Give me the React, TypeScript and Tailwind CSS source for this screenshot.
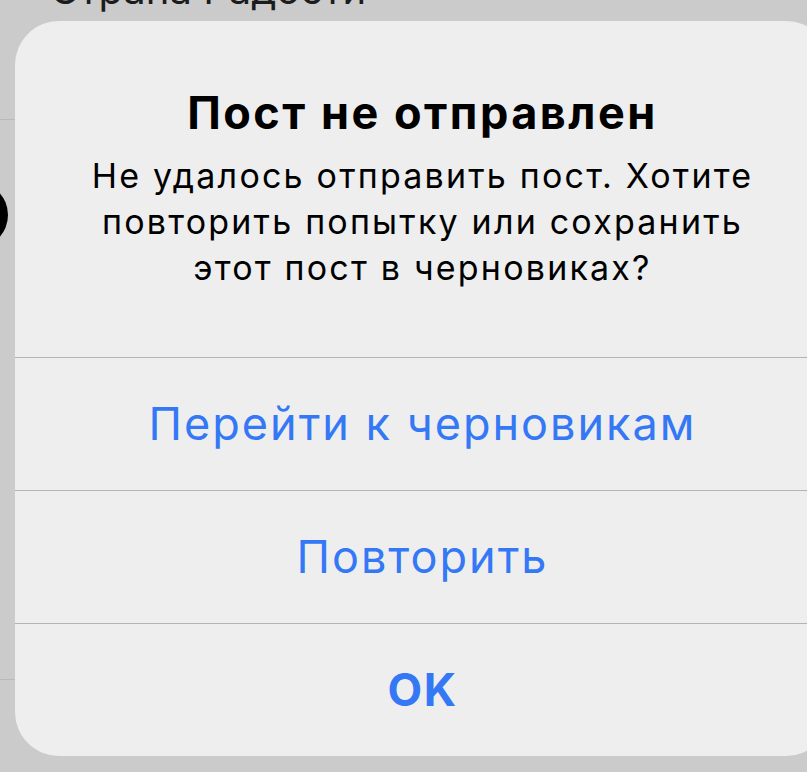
import React from 'react';

const actions = [
    { label: 'Перейти к черновикам', bold: false },
    { label: 'Повторить', bold: false },
    { label: 'OK', bold: true },
];

export default function App() {
    return (
        <div
            className="relative w-[807px] h-[772px] overflow-hidden bg-[#cbcbcb]"
            style={{ fontFamily: 'Inter, Roboto, "Noto Sans", sans-serif' }}
        >
            {/* dimmed list behind the alert */}
            <div className="flex flex-col">
                <div className="h-[120px] border-b border-[#b9b9b9] pl-[50px]">
                    <p className="-mt-[30px] text-[40px] leading-[40px] text-[#1c1c1c]">Страна Радости</p>
                </div>
                <div className="h-[560px] border-b border-[#b9b9b9] pt-[62px]">
                    <div className="-ml-[58px] w-[66px] h-[66px] rounded-full bg-black" />
                </div>
            </div>

            {/* alert */}
            <div className="absolute left-[15px] top-[21px] w-[815px] h-[735px] rounded-[44px] bg-[#eeeeef] flex flex-col">
                <div className="flex flex-col items-center text-center pt-[66px] h-[336px]">
                    <h1 className="text-[45px] leading-[52px] font-bold text-black tracking-[2.5px]">Пост не отправлен</h1>
                    <p className="mt-[14px] text-[34px] leading-[46px] text-black tracking-[2.2px]">
                        Не удалось отправить пост. Хотите
                        <br />
                        повторить попытку или сохранить
                        <br />
                        этот пост в черновиках?
                    </p>
                </div>
                {actions.map((a) => (
                    <button
                        key={a.label}
                        className="h-[133px] border-t border-[#b3b3b3] flex items-center justify-center text-[#3478f6]"
                    >
                        <span
                            className={
                                a.bold
                                    ? 'text-[45px] font-bold tracking-[1.5px]'
                                    : 'text-[45px] tracking-[2px]'
                            }
                        >
                            {a.label}
                        </span>
                    </button>
                ))}
            </div>
        </div>
    );
}
